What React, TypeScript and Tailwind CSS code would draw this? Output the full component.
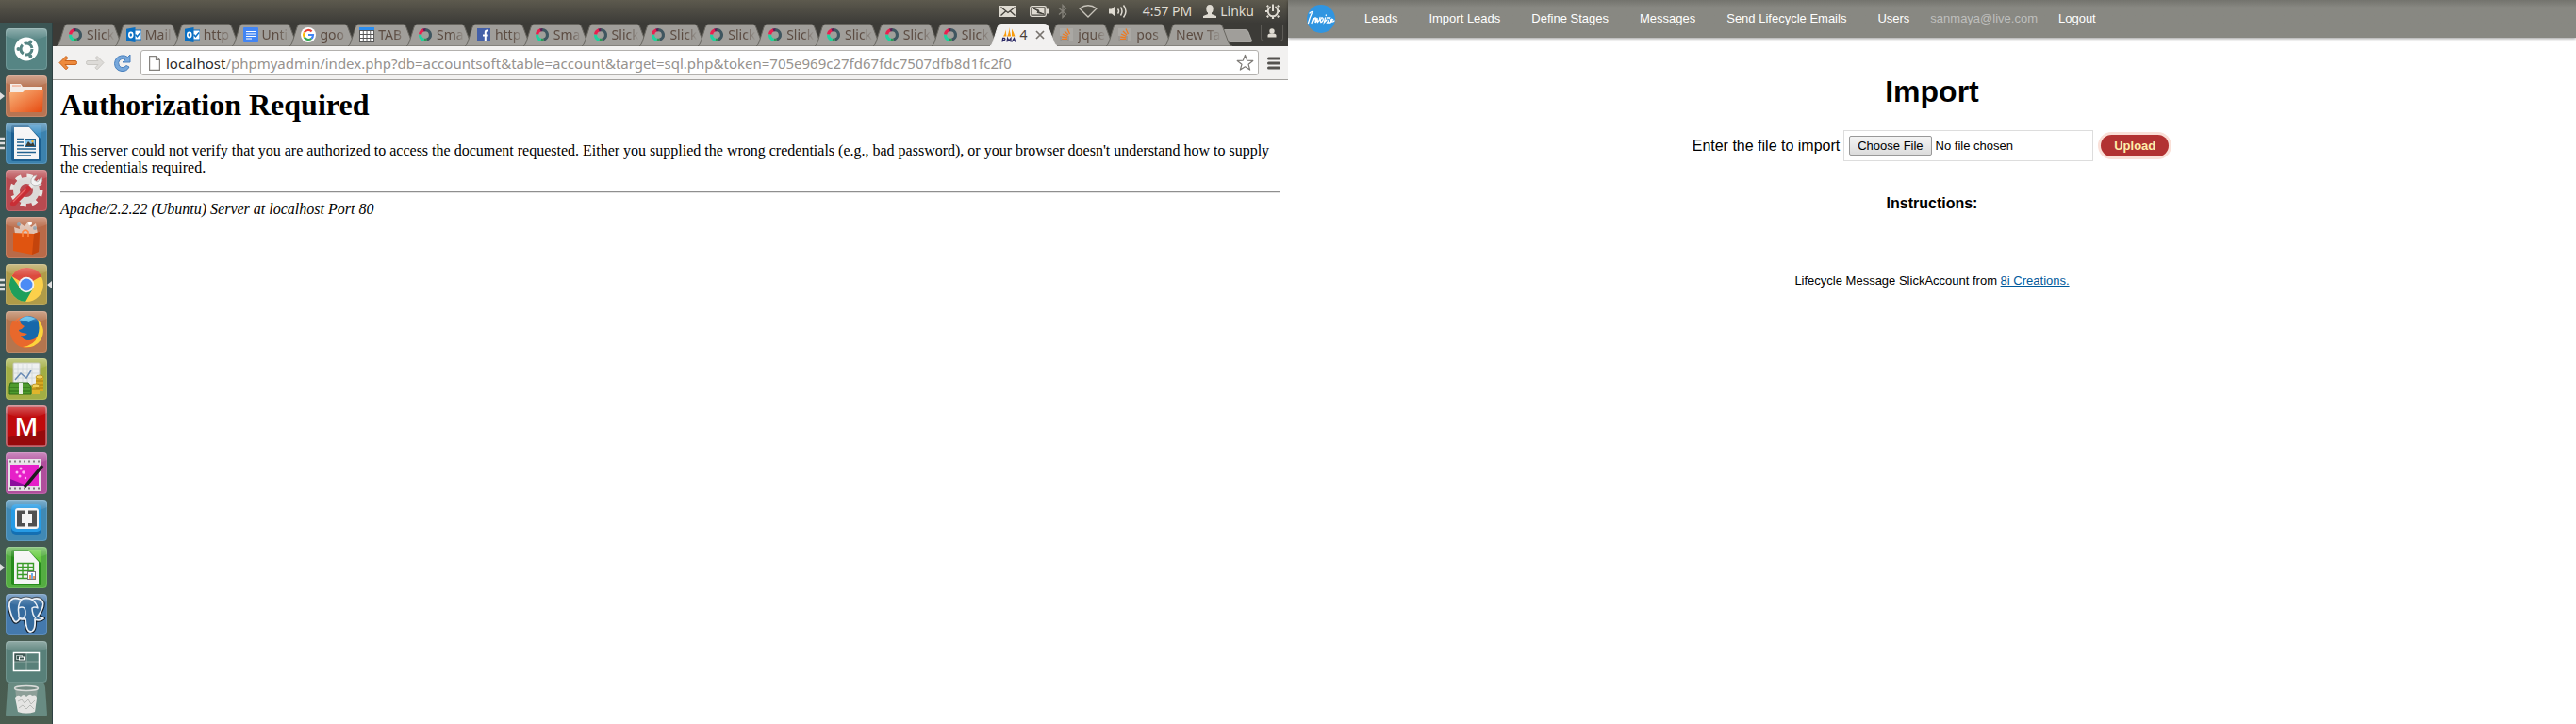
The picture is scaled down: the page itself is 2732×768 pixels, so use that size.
import React from "react";

const sans = "font-['Noto_Sans',sans-serif]";

type IconName = "ring" | "outlook" | "doc" | "google" | "table" | "facebook" | "pma" | "stack" | "none";

function Favicon({ name }: { name: IconName }) {
  switch (name) {
    case "ring":
      return (
        <svg viewBox="0 0 16 16" className="h-4 w-4 shrink-0" fill="none" strokeWidth="3.2">
          <path d="M8 2.6A5.4 5.4 0 0 1 9.5 13.2" stroke="#3f5660" />
          <path d="M9.6 13.2A5.4 5.4 0 0 1 6.6 13.2" stroke="#2c9a55" />
          <path d="M6.6 13.2A5.4 5.4 0 0 1 2.6 7.6" stroke="#1fd2a0" />
          <path d="M2.6 7.4A5.4 5.4 0 0 1 6.4 2.8" stroke="#e8214f" />
          <path d="M6 3A5.4 5.4 0 0 1 8.2 2.6" stroke="#5b2154" />
        </svg>
      );
    case "outlook":
      return (
        <svg viewBox="0 0 16 16" className="h-4 w-4 shrink-0">
          <rect x="8" y="3" width="8" height="10" fill="#fff" stroke="#0a6fc2" />
          <path d="M9.5 7.5L11.5 9.8L15 5.5" fill="none" stroke="#0a6fc2" strokeWidth="1.4" />
          <path d="M0 1.7L9.5 0V16L0 14.3Z" fill="#0a6fc2" />
          <ellipse cx="4.8" cy="8" rx="2" ry="2.6" fill="none" stroke="#fff" strokeWidth="1.6" />
        </svg>
      );
    case "doc":
      return (
        <svg viewBox="0 0 16 16" className="h-4 w-4 shrink-0">
          <rect width="16" height="16" rx="1" fill="#4285f4" />
          <path d="M3 4.5H13M3 7H13M3 9.500H13M3 12H9" stroke="#fff" strokeWidth="1.2" />
        </svg>
      );
    case "google":
      return (
        <svg viewBox="0 0 16 16" className="h-4 w-4 shrink-0">
          <circle cx="8" cy="8" r="8" fill="#fff" />
          <g fill="none" strokeWidth="2.2">
            <path d="M11.6 4.4A5 5 0 0 0 3.7 5.6" stroke="#ea4335" />
            <path d="M3.7 5.6A5 5 0 0 0 3.7 10.4" stroke="#fbbc05" />
            <path d="M3.7 10.400A5 5 0 0 0 11.300 11.800" stroke="#34a853" />
            <path d="M11.3 11.8A5 5 0 0 0 13 8H8" stroke="#4285f4" />
          </g>
        </svg>
      );
    case "table":
      return (
        <svg viewBox="0 0 16 16" className="h-4 w-4 shrink-0">
          <rect width="16" height="16" fill="#555" />
          <rect width="16" height="3" fill="#2a8df0" />
          {[0, 1, 2, 3].map((c) =>
            [0, 1, 2].map((r) => (
              <rect key={`${c}-${r}`} x={1 + c * 3.75} y={4 + r * 4} width="2.8" height="3" fill="#fff" />
            )),
          )}
        </svg>
      );
    case "facebook":
      return (
        <svg viewBox="0 0 16 16" className="h-4 w-4 shrink-0">
          <rect x="1" y="1" width="14" height="14" fill="#4460a8" />
          <path d="M13 3.500H11.500Q9.800 3.500 9.800 5.200V15M7 8.400H12.700" fill="none" stroke="#fff" strokeWidth="2" />
        </svg>
      );
    case "pma":
      return (
        <svg viewBox="0 0 16 16" className="h-4 w-4 shrink-0">
          <path d="M2 9.500Q4 7 4.500 2.500L5.500 9.500ZM6 9.500Q8.500 6 8 0L10.200 9.500ZM11 9.500V1.500Q13 5 14.500 9.500Z" fill="#f89c0e" />
          <path d="M1 15.500L1.600 11.500H3.300Q4.500 12.600 3.300 13.600H1.600M6 15.500L6.600 11.500L8 14L10 11.500V15.500M11 15.500L13.500 11.500L14.800 15.500M12 14.200H14.300" fill="none" stroke="#2c2a66" strokeWidth="1.3" />
        </svg>
      );
    case "stack":
      return (
        <svg viewBox="0 0 16 16" className="h-4 w-4 shrink-0" fill="none">
          <rect x="1" y="1" width="14" height="14" fill="#aaa8a4" />
          <path d="M2 9V14H10V9" stroke="#8f8c88" strokeWidth="1.2" />
          <path d="M3 12.300H9M3.200 10L9 10.800M4 7L9.300 9.400M6 4L10 8M9 1.500L11.500 7" stroke="#ec7a22" strokeWidth="1.3" />
        </svg>
      );
    default:
      return null;
  }
}

const tabs: { icon: IconName; title: string; active?: boolean }[] = [
  { icon: "ring", title: "Slick" },
  { icon: "outlook", title: "Mail" },
  { icon: "outlook", title: "http" },
  { icon: "doc", title: "Unti" },
  { icon: "google", title: "goo" },
  { icon: "table", title: "TAB" },
  { icon: "ring", title: "Sma" },
  { icon: "facebook", title: "http" },
  { icon: "ring", title: "Sma" },
  { icon: "ring", title: "Slick" },
  { icon: "ring", title: "Slick" },
  { icon: "ring", title: "Slick" },
  { icon: "ring", title: "Slick" },
  { icon: "ring", title: "Slick" },
  { icon: "ring", title: "Slick" },
  { icon: "ring", title: "Slick" },
  { icon: "pma", title: "4", active: true },
  { icon: "stack", title: "jque" },
  { icon: "stack", title: "pos" },
  { icon: "none", title: "New Ta" },
];

function Tab({ icon, title, active }: { icon: IconName; title: string; active?: boolean }) {
  return (
    <div className={`relative h-6 min-w-0 flex-1 ${active ? "z-10" : ""}`}>
      <svg viewBox="0 0 72 24" preserveAspectRatio="none" className="absolute top-0 left-0 h-6 w-[calc(100%+10px)]">
        <path
          d="M0 24Q2 23 3 20L8 4Q9 .5 12 .5H58Q61 .5 62 4L68 20Q69 23 72 24Z"
          fill={active ? "#f2f1f0" : "#a09e9a"}
          stroke={active ? "#f2f1f0" : "#67655f"}
          strokeWidth="1"
        />
        {!active && <path d="M10 1.500H60" stroke="#bcbab6" />}
      </svg>
      <button className="relative flex h-6 w-full items-center gap-1 overflow-hidden pl-3 text-left">
        <Favicon name={icon} />
        <span
          className={
            active
              ? "text-[14px] leading-6 text-[#4a4038]"
              : "w-7 grow overflow-hidden [mask-image:linear-gradient(to_right,#000_60%,transparent_98%)] text-[14px] leading-6 whitespace-nowrap text-[#5c4c42]"
          }
        >
          {title}
        </span>
        {active && (
          <svg viewBox="0 0 10 10" className="ml-1 h-[10px] w-[10px] shrink-0">
            <path d="M1 1L9 9M9 1L1 9" stroke="#77736e" strokeWidth="1.700" />
          </svg>
        )}
      </button>
    </div>
  );
}

function TopPanel() {
  return (
    <header className="flex h-6 items-center justify-end bg-linear-to-b from-[#5d5a4e] to-[#3d3c38] pr-2 text-[14px] text-[#dfdbd2]">
      <svg viewBox="0 0 18 12" className="h-3 w-[18px]">
        <rect width="18" height="12" fill="#dfdbd2" />
        <path d="M1.500 1.500L9 7.500L16.500 1.500M1.500 10.500L6.500 6M16.500 10.500L11.500 6" fill="none" stroke="#45433d" strokeWidth="1.300" />
      </svg>
      <svg viewBox="0 0 20 12" className="ml-[14px] h-3 w-5">
        <rect x=".7" y=".7" width="16.600" height="10.600" rx="1.500" fill="none" stroke="#dfdbd2" strokeWidth="1.300" />
        <rect x="18" y="3.500" width="2" height="5" fill="#dfdbd2" />
        <rect x="2.500" y="2.500" width="13" height="7" fill="#dfdbd2" />
        <path d="M4 3L10 5.200L9 6.400L15 9L8 7.500L9 6Z" fill="#45433d" stroke="#45433d" />
      </svg>
      <svg viewBox="0 0 10 16" className="ml-[10px] h-4 w-[10px]">
        <path d="M1 4.500L8.500 11L5 14.500V1.500L8.500 5L1 11.500" fill="none" stroke="#85827a" strokeWidth="1.300" />
      </svg>
      <svg viewBox="0 0 20 14" className="ml-3 h-[14px] w-5">
        <path d="M1 4Q10 -2.500 19 4L10 13Z" fill="none" stroke="#c8c4bb" strokeWidth="1.300" />
      </svg>
      <svg viewBox="0 0 20 16" className="ml-3 h-4 w-5">
        <path d="M0 5.500H3L7 2V14L3 10.500H0Z" fill="#dfdbd2" />
        <path d="M9.500 5.500Q11.500 8 9.500 10.500M12.500 3.500Q15.500 8 12.500 12.500M15.500 1.500Q20.500 8 15.500 14.500" fill="none" stroke="#dfdbd2" strokeWidth="1.500" />
      </svg>
      <span className="ml-4 leading-6">4:57 PM</span>
      <svg viewBox="0 0 14 14" className="ml-3 h-[14px] w-[14px]">
        <ellipse cx="7" cy="4.500" rx="3.700" ry="4.500" fill="#dfdbd2" />
        <path d="M5 8V10L0 12V14H14V12L9 10V8Z" fill="#dfdbd2" />
      </svg>
      <span className="ml-1 leading-6">Linku</span>
      <svg viewBox="0 0 16 16" className="ml-3 h-4 w-4" fill="none" stroke="#dfdbd2">
        <path d="M12.900 3.100L14.200 1.800M14 8H16M12.900 12.900L14.200 14.200M8 14V16M3.100 12.900L1.800 14.200M2 8H0M3.100 3.100L1.800 1.800" strokeWidth="2.200" />
        <path d="M5.600 3.200A5.300 5.300 0 1 0 10.400 3.200" strokeWidth="2" />
        <path d="M8 .5V8" strokeWidth="2" />
      </svg>
    </header>
  );
}

function Toolbar() {
  return (
    <div className="flex h-9 items-center border-b border-[#a5a3a0] bg-[#f2f1f0] pr-2 pl-[6px]">
      <button aria-label="Back" className="h-5 w-5">
        <svg viewBox="0 0 20 20" className="h-5 w-5">
          <path d="M1 9.500L8 2.500L10 4.500L7 7.500H18Q19.500 7.500 19.500 9.500T18 11.500H7L10 14.800L8 16.800Z" fill="#ee8a3c" stroke="#c9641d" strokeLinejoin="round" />
        </svg>
      </button>
      <button aria-label="Forward" className="ml-[9px] h-5 w-5">
        <svg viewBox="0 0 20 20" className="h-5 w-5">
          <path d="M19 9.500L12 2.500L10 4.500L13 7.500H2Q.5 7.500 .5 9.500T2 11.500H13L10 14.800L12 16.800Z" fill="#dddbd8" stroke="#c9c7c3" strokeLinejoin="round" />
        </svg>
      </button>
      <button aria-label="Reload" className="ml-[9px] h-5 w-5">
        <svg viewBox="0 0 20 20" className="h-5 w-5">
          <path d="M18 1V9H10L13 6Q10 4 7 6.500Q4.500 9.500 6.500 13Q10 16.500 14 12.500L17 14Q14.500 19 9 18.500Q2 17.500 1.500 10.500Q2 3.500 8.500 2Q12.500 1.300 15.500 3.500Z" fill="#77a8dc" stroke="#4a80bd" strokeLinejoin="round" />
        </svg>
      </button>
      <div className="ml-[9px] flex h-[27px] min-w-0 flex-1 items-center rounded-[3px] border border-[#b3b1ae] bg-white pr-1 pl-2">
        <svg viewBox="0 0 12 16" className="h-4 w-3 shrink-0">
          <path d="M.6 .6H7.500L11.400 4.500V15.400H.6ZM7.500 .6V4.500H11.400" fill="#fff" stroke="#85827e" strokeWidth="1.200" />
        </svg>
        <div className="ml-[6px] min-w-0 flex-1 truncate text-[15px] leading-6 text-[#96928e]">
          <span className="text-[#2c2a28]">localhost</span>
          /phpmyadmin/index.php?db=accountsoft&amp;table=account&amp;target=sql.php&amp;token=705e969c27fd67fdc7507dfb8d1fc2f0
        </div>
        <button aria-label="Bookmark this page">
          <svg viewBox="0 0 20 20" className="h-[19px] w-[19px]">
            <path d="M10 1.500L12.300 7.500L18.700 7.800L13.700 11.800L15.400 18L10 14.500L4.600 18L6.300 11.800L1.300 7.800L7.700 7.500Z" fill="#fff" stroke="#7d7a76" strokeWidth="1.300" strokeLinejoin="round" />
          </svg>
        </button>
      </div>
      <button aria-label="Menu" className="ml-[9px]">
        <svg viewBox="0 0 14 14" className="h-[14px] w-[14px]">
          <path d="M1.500 2H12.500M1.500 7H12.500M1.500 12H12.500" stroke="#54524f" strokeWidth="3" strokeLinecap="round" />
        </svg>
      </button>
    </div>
  );
}

const launcher: { label: string; tile: string; marks?: number; focused?: boolean; art: React.ReactNode }[] = [
  {
    label: "Dash",
    tile: "bg-[#568584]",
    art: (
      <>
        <circle cx="22" cy="22" r="12.500" fill="#fff" />
        <circle cx="22" cy="22" r="6" fill="none" stroke="#568584" strokeWidth="3" strokeDasharray="10.500 2.060" />
        <circle cx="13.500" cy="22" r="2" fill="#568584" />
        <circle cx="26.300" cy="14.600" r="2" fill="#568584" />
        <circle cx="26.300" cy="29.400" r="2" fill="#568584" />
      </>
    ),
  },
  {
    label: "Files",
    tile: "bg-[#b87452]",
    marks: 1,
    art: (
      <>
        <path d="M5 9H16L18 12H39V24H5Z" fill="#f4ece6" />
        <path d="M7 11H16" stroke="#f0906a" />
        <path d="M4 18H18L21 15H40L39 38Q39 39 37 39H6Q5 39 5 38Z" fill="url(#orange)" />
      </>
    ),
  },
  {
    label: "Writer",
    tile: "bg-[#3c82ae]",
    marks: 3,
    art: (
      <>
        <rect x="6" y="3" width="32" height="38" rx="2" fill="#1c5f90" />
        <path d="M24 3H38V18Z" fill="#3f91c5" />
        <path d="M9 5H25L35 16V39H9Z" fill="#f5f5f5" />
        <path d="M12 17.500H19M12 21H19M12 24.500H19M12 28H32M12 31.500H32M12 35H27" stroke="#20618f" strokeWidth="1.500" />
        <rect x="20.500" y="17.500" width="11" height="8" fill="#86c6ed" stroke="#20618f" />
        <path d="M21 25L24 20L27 23L29 21L31 25Z" fill="#3d3d35" />
        <circle cx="28.500" cy="20" r="1.200" fill="#f4b430" />
      </>
    ),
  },
  {
    label: "System Settings",
    tile: "bg-[#b84a50]",
    art: (
      <>
        <circle cx="22" cy="22" r="15" fill="none" stroke="#e6e4e1" strokeWidth="5" strokeDasharray="6 5.780" />
        <circle cx="22" cy="22" r="10.500" fill="none" stroke="#dcdad7" strokeWidth="7" />
        <path d="M18 26L30 14" stroke="#e8e8e8" strokeWidth="4" />
        <path d="M33 6Q26 7 27 14Q30 19 37 15Q40 12 38 8L34 13L30 11Z" fill="#f3f3f3" stroke="#aaa" strokeWidth=".7" />
        <path d="M8 36L24 20" stroke="#c92e35" strokeWidth="6" strokeLinecap="round" />
        <path d="M8 34L22 20" stroke="#e86a6a" strokeWidth="1.200" />
      </>
    ),
  },
  {
    label: "Software Center",
    tile: "bg-[#b96a48]",
    art: (
      <>
        <path d="M10 18L9 11L15 13L14 6L20 10L24 5L27 11L32 7L34 18Z" fill="#e8d8ce" opacity=".8" />
        <circle cx="14" cy="8" r="2" fill="#7d91a0" />
        <circle cx="26" cy="7" r="2" fill="#fff" />
        <circle cx="31" cy="12" r="2" fill="#9aa5ae" />
        <path d="M8 17L30 18L36 16L35 37L28 40L8 36Z" fill="#e05410" />
        <path d="M30 18L36 16L35 37L28 40Z" fill="#c4440c" />
        <path d="M18 21V16Q21 12 24 16V21" fill="none" stroke="#ff8840" strokeWidth="1.600" />
      </>
    ),
  },
  {
    label: "Chrome",
    tile: "bg-[#b09b48]",
    marks: 3,
    focused: true,
    art: (
      <>
        <circle cx="22" cy="22" r="18" fill="#fcd04b" />
        <path d="M22 22L6.400 13A18 18 0 0 1 37.600 13Z" fill="#dc4b3e" />
        <path d="M22 14H38Q36 8 31 6L22 4Z" fill="#dc4b3e" />
        <path d="M6.400 13A18 18 0 0 0 21 40L29 26L15 25Z" fill="#1e9f5c" />
        <circle cx="22" cy="22" r="8.300" fill="#f2f2f2" />
        <circle cx="22" cy="22" r="6.500" fill="#4b8bf5" />
      </>
    ),
  },
  {
    label: "Firefox",
    tile: "bg-[#b4754e]",
    art: (
      <>
        <circle cx="22" cy="22" r="17" fill="#e8682c" />
        <circle cx="24" cy="18" r="13" fill="#1768aa" />
        <path d="M14 10Q21 2 32 8Q27 9 25 12Q18 9 14 10Z" fill="#5bbbe8" />
        <path d="M34 9Q44 19 37 31Q30 40 18 38Q31 36 34 26Q37 18 34 9Z" fill="#fbd33c" />
        <path d="M5 22Q4 15 8 10L10 14L15 9Q15 14 20 16Q18 19 14 20Q14 22 18 23L23 24Q20 27 16 26Q20 33 28 31Q24 38 14 34Q6 30 5 22Z" fill="#e8682c" />
      </>
    ),
  },
  {
    label: "Money Manager",
    tile: "bg-[#a2ae44]",
    art: (
      <>
        <rect x="8" y="5" width="28" height="23" rx="1" fill="#eceeee" stroke="#b9bcae" />
        <path d="M13 6V27M18 6V27M23 6V27M28 6V27M9 11H35M9 16H35M9 21H35" stroke="#cfd4d6" strokeWidth=".8" />
        <path d="M10 23L16 16L22 21L27 13" fill="none" stroke="#6a8bb5" strokeWidth="1.500" />
        <path d="M5 26L24 26L27 30V38H4V30Z" fill="#4f9b2e" stroke="#2c6a17" />
        <path d="M4 31H26M4 35H26" stroke="#2c6a17" />
        <path d="M14 26H18V38H14Z" fill="#e9efe5" />
        <path d="M32 20V35H40V20Z" fill="#d9a920" />
        <path d="M28 29V38H36V29Z" fill="#e0b52c" />
        <path d="M32 24H40M32 28H40M28 33H36M32 32H40" stroke="#a67d10" />
        <ellipse cx="36" cy="20" rx="4" ry="2" fill="#f3d35d" stroke="#a67d10" strokeWidth=".7" />
        <ellipse cx="32" cy="29" rx="4" ry="2" fill="#f3d35d" stroke="#a67d10" strokeWidth=".7" />
      </>
    ),
  },
  {
    label: "Mendeley",
    tile: "bg-[#b75058]",
    art: (
      <>
        <rect x="2" y="2" width="40" height="40" rx="1" fill="#c00a0c" />
        <path d="M2 34L42 26V42H2Z" fill="#970a0c" />
        <text x="22" y="32" textAnchor="middle" fill="#fff" fontFamily="Open Sans, sans-serif" fontSize="27" fontWeight="600">
          M
        </text>
      </>
    ),
  },
  {
    label: "Video Editor",
    tile: "bg-[#b04e9c]",
    art: (
      <>
        <rect x="3" y="7" width="34" height="34" fill="#e6e2e6" />
        <path d="M4 9.500H37M4 38.500H37" stroke="#777" strokeWidth="2" strokeDasharray="2 3" />
        <rect x="5" y="13" width="30" height="23" fill="#e620c8" />
        <path d="M5 36V28L25 36Z" fill="#8c0f9c" />
        <g fill="#ffb4f6">
          <circle cx="16" cy="17" r="1.500" />
          <circle cx="12" cy="21" r="1.500" />
          <circle cx="19" cy="21" r="1.800" />
          <circle cx="15" cy="25" r="1.500" />
          <circle cx="21" cy="27" r="1.200" />
        </g>
        <path d="M20 37L39 14" stroke="#1c1c1c" strokeWidth="3.500" />
      </>
    ),
  },
  {
    label: "Brackets",
    tile: "bg-[#4089b4]",
    art: (
      <>
        <rect x="6" y="6" width="32" height="31" rx="5" fill="#146fb2" />
        <rect x="6" y="5" width="32" height="29" rx="5" fill="#279be4" />
        <rect x="10" y="9" width="25" height="22" rx="3" fill="#f5f5f5" />
        <path d="M21 11.500V15H17V25H21V28.500H12V11.500ZM24 11.500V15H28V25H24V28.500H33V11.500Z" fill="#505050" />
      </>
    ),
  },
  {
    label: "Calc",
    tile: "bg-[#54ad41]",
    marks: 1,
    art: (
      <>
        <rect x="6" y="3" width="32" height="38" rx="2" fill="#278b1c" />
        <path d="M24 3H38V18Z" fill="#69cd42" />
        <path d="M9 5H25L35 16V39H9Z" fill="#f5f5f5" />
        <path d="M12.500 17.500H29.500V33.500H12.500ZM12 21.500H30M12 25.500H30M12 29.500H30M18 17V34M24 17V34" fill="none" stroke="#3a9b29" strokeWidth="1.400" />
        <rect x="23.500" y="26.500" width="8" height="8" fill="#fff" stroke="#777" />
        <path d="M26 30V34M30 31V34" stroke="#ee7b2d" strokeWidth="1.500" />
        <path d="M28 28V34" stroke="#3d8fe0" strokeWidth="1.500" />
      </>
    ),
  },
  {
    label: "pgAdmin",
    tile: "bg-[#4479ad]",
    art: (
      <g fill="#356b9e" strokeLinejoin="round">
        <path d="M16 6Q6 2 4 10Q3 16 8 27Q11 33 15 26L21 27Q22 40 26 40Q32 40 31 27Q36 29 40 26L34 24Q42 12 39 8Q35 3 28 6Q22 3 16 6Z" stroke="#15222f" strokeWidth="4" />
        <path d="M16 6Q6 2 4 10Q3 16 8 27Q11 33 15 26L21 27Q22 40 26 40Q32 40 31 27Q36 29 40 26L34 24Q42 12 39 8Q35 3 28 6Q22 3 16 6Z" stroke="#e8eef4" strokeWidth="1.800" />
        <path d="M17 6Q12 12 14 22Q13 27 18 27Q23 22 20 15Q17 13 14 15M28 6Q33 10 34 15Q31 13 28 15Q28 22 32 26" fill="none" stroke="#e8eef4" strokeWidth="1.500" />
      </g>
    ),
  },
  {
    label: "Workspace Switcher",
    tile: "bg-[#588079]",
    art: (
      <>
        <rect x="9" y="13" width="13" height="9" fill="#3c5551" />
        <path d="M22 13V31M9 22H36" stroke="#8fa9a4" />
        <rect x="8.500" y="12.500" width="27" height="19" fill="none" stroke="#fff" strokeWidth="1.500" />
        <rect x="11.500" y="15.500" width="6" height="4" fill="none" stroke="#a9bab6" />
        <rect x="14.500" y="17" width="5" height="3" fill="#3c5551" stroke="#fff" />
      </>
    ),
  },
];

function Launcher() {
  return (
    <nav
      aria-label="Launcher"
      className="flex w-14 shrink-0 flex-col gap-[6px] border-r border-[#2e4142] bg-linear-to-b from-[#3b5554] via-[#3c5454] to-[#4a5d50] pt-[6px]"
    >
      <svg className="absolute h-0 w-0">
        <linearGradient id="orange" x1="0" y1="0" x2="1" y2="1">
          <stop offset="0" stopColor="#f9b77e" />
          <stop offset="1" stopColor="#e6490f" />
        </linearGradient>
        <linearGradient id="shine" x1="0" y1="0" x2="0" y2="1">
          <stop offset="0" stopColor="#fff" stopOpacity=".35" />
          <stop offset="1" stopColor="#fff" stopOpacity="0" />
        </linearGradient>
      </svg>
      {launcher.map((item) => (
        <div key={item.label} className="flex h-11 items-center">
          <svg viewBox="0 0 6 14" className="h-[14px] w-[6px] shrink-0">
            {item.marks === 1 && <path d="M0 3L5 7L0 11Z" fill="#dedede" />}
            {item.marks === 3 && <path d="M0 2H5M0 7H5M0 12H5" stroke="#dedede" strokeWidth="2.500" />}
          </svg>
          <button aria-label={item.label} className={`h-11 w-11 overflow-hidden rounded-[4px] ${item.tile}`}>
            <svg viewBox="0 0 44 44" className="h-11 w-11">
              {item.art}
              <path d="M0 0H44V8Q22 18 0 8Z" fill="url(#shine)" />
              <rect x=".5" y=".5" width="43" height="43" rx="4" fill="none" stroke="#fff" strokeOpacity=".15" />
            </svg>
          </button>
          {item.focused && (
            <svg viewBox="0 0 5 8" className="h-2 w-[5px]">
              <path d="M5 0V8L0 4Z" fill="#dedede" />
            </svg>
          )}
        </div>
      ))}
      <button aria-label="Trash" className="-mt-[5px] ml-[6px] h-9 w-11">
        <svg viewBox="0 0 44 36" className="h-9 w-11">
          <path d="M4 0H40Q41 0 42 4L44 33Q44 35 42 35H2Q0 35 0 33L2 4Q3 0 4 0Z" fill="#688b82" />
          <path d="M10 5L13 30Q22 33 31 30L34 5Z" fill="#8d9f98" />
          <path d="M10 15Q13 11 16 14Q19 10 22 14Q26 10 28 13Q33 11 33 16L31 30Q22 33 13 30Z" fill="#e5e5e3" />
          <path d="M13 19L17 17L20 21L24 17L27 22L31 18M14 26L18 23L22 27L26 23L30 27" fill="none" stroke="#b9bbb8" />
          <ellipse cx="22" cy="5" rx="12.500" ry="2.500" fill="#738b83" stroke="#dadcda" strokeWidth="1.500" />
        </svg>
      </button>
    </nav>
  );
}

function Desktop() {
  return (
    <section className={`flex min-w-0 flex-1 basis-0 flex-col ${sans}`}>
      <TopPanel />
      <div className="flex flex-1">
        <Launcher />
        <div className="flex min-w-0 flex-1 flex-col">
          <div className="flex h-[25px] items-end bg-[#3c3b37] pl-1">
            <div className="flex min-w-0 flex-1">
              {tabs.map((t, i) => (
                <Tab key={i} {...t} />
              ))}
            </div>
            <button aria-label="New tab" className="mb-1 h-[14px] w-8 shrink-0">
              <svg viewBox="0 0 32 14" className="h-[14px] w-8">
                <path d="M2 .5H24Q26 .5 27 3L30.500 12Q31 13.500 29 13.500H8Q5 13.500 4 11L.7 2Q.5 .5 2 .5Z" fill="#a09e9a" stroke="#c0beba" strokeWidth=".7" />
              </svg>
            </button>
            <button aria-label="Profile" className="mr-[5px] mb-[5px] ml-2 flex h-[17px] w-6 shrink-0 items-center justify-center rounded-b border border-t-0 border-[#5d5b56]">
              <svg viewBox="0 0 10 10" className="h-[10px] w-[10px]">
                <circle cx="5" cy="3" r="2.700" fill="#dfdbd2" />
                <path d="M.5 9.500V7Q1 5.500 3 5.500H7Q9 5.500 9.500 7V9.500Z" fill="#dfdbd2" />
              </svg>
            </button>
          </div>
          <Toolbar />
          <main className="p-2 font-['Liberation_Serif',serif] text-base leading-[18px] text-black">
            <h1 className="text-[32px] leading-9 font-bold">Authorization Required</h1>
            <p className="mt-[22px]">
              This server could not verify that you are authorized to access the document requested. Either you supplied
              the wrong credentials (e.g., bad password), or your browser doesn't understand how to supply the
              credentials required.
            </p>
            <hr className="mt-4 h-[2px] border-t border-b border-t-[#8f8f8f] border-b-[#e4e4e4]" />
            <address className="mt-2">Apache/2.2.22 (Ubuntu) Server at localhost Port 80</address>
          </main>
        </div>
      </div>
    </section>
  );
}

function ImportPage() {
  return (
    <section className="min-w-0 flex-1 basis-0 font-['Liberation_Sans',Arial,sans-serif] text-black">
      <nav className="flex h-10 items-center bg-linear-to-b from-[#73736d] to-[#888882] to-20% pl-5 text-[13px] text-white shadow-[0_1px_3px_rgba(0,0,0,0.4)]">
        <a href="#home" aria-label="Invoize" className="mr-[31px]">
          <svg viewBox="0 0 30 30" className="h-[30px] w-[30px]">
            <circle cx="15" cy="15" r="15" fill="#3095e1" />
            <path
              d="M5.500 8.500Q3 14 1.500 19.500M3 9Q5 7 6.500 7.500M5 19.500L7 14L6.500 18Q8.500 13 9.500 14L9 18.500Q10 19 11 14L11.500 18.500Q13.500 17 14 13.500M15.500 14Q13.500 17 15 18.700Q17.500 17.500 17.300 15Q16.500 13.300 15.500 14M19.500 14L18.500 18.700L21 16M20.300 11V11.500M21.300 14H24.500L21.500 19H25L27.500 15.500Q25.500 14.500 25.500 17.500Q27 19 29 17"
              fill="none"
              stroke="#fff"
              strokeWidth="1.300"
              strokeLinecap="round"
            />
          </svg>
        </a>
        <div className="flex items-center gap-[33px]">
          <a href="#leads">Leads</a>
          <a href="#import">Import Leads</a>
          <a href="#stages">Define Stages</a>
          <a href="#messages">Messages</a>
          <a href="#emails">Send Lifecycle Emails</a>
          <a href="#users">Users</a>
        </div>
        <span className="mx-[22px] text-[#bfbfbd]">sanmaya@live.com</span>
        <a href="#logout">Logout</a>
      </nav>
      <main className="flex flex-col items-center pt-[39px]">
        <h1 className="text-[32px] leading-[37px] font-bold">Import</h1>
        <form className="mt-[22px] flex items-center" onSubmit={(e) => e.preventDefault()}>
          <label htmlFor="file" className="pr-1 text-base leading-[30px]">
            Enter the file to import
          </label>
          <input
            id="file"
            type="file"
            className="h-[33px] w-[265px] border border-[#ddd] p-[5px] text-[13px] file:mr-1 file:h-[21px] file:rounded-[2px] file:border file:border-solid file:border-[#999] file:bg-linear-to-b file:from-[#f4f4f4] file:to-[#dcdcdc] file:px-2 file:text-[13px] file:leading-[18px] file:text-black"
          />
          <button className="mr-[3px] ml-2 h-[23px] rounded-full bg-[#b23232] px-[14px] text-[13px] leading-[23px] font-bold text-[#ffeeaa] ring-3 ring-[#fae0d8]">
            Upload
          </button>
        </form>
        <h2 className="mt-9 text-base leading-[18px] font-bold">Instructions:</h2>
        <footer className="mt-[65px] text-[13px] leading-4">
          Lifecycle Message SlickAccount from{" "}
          <a href="#creations" className="text-[#005a9c] underline">
            8i Creations.
          </a>
        </footer>
      </main>
    </section>
  );
}

export default function App() {
  return (
    <div className="flex min-h-screen w-full bg-white">
      <Desktop />
      <ImportPage />
    </div>
  );
}
